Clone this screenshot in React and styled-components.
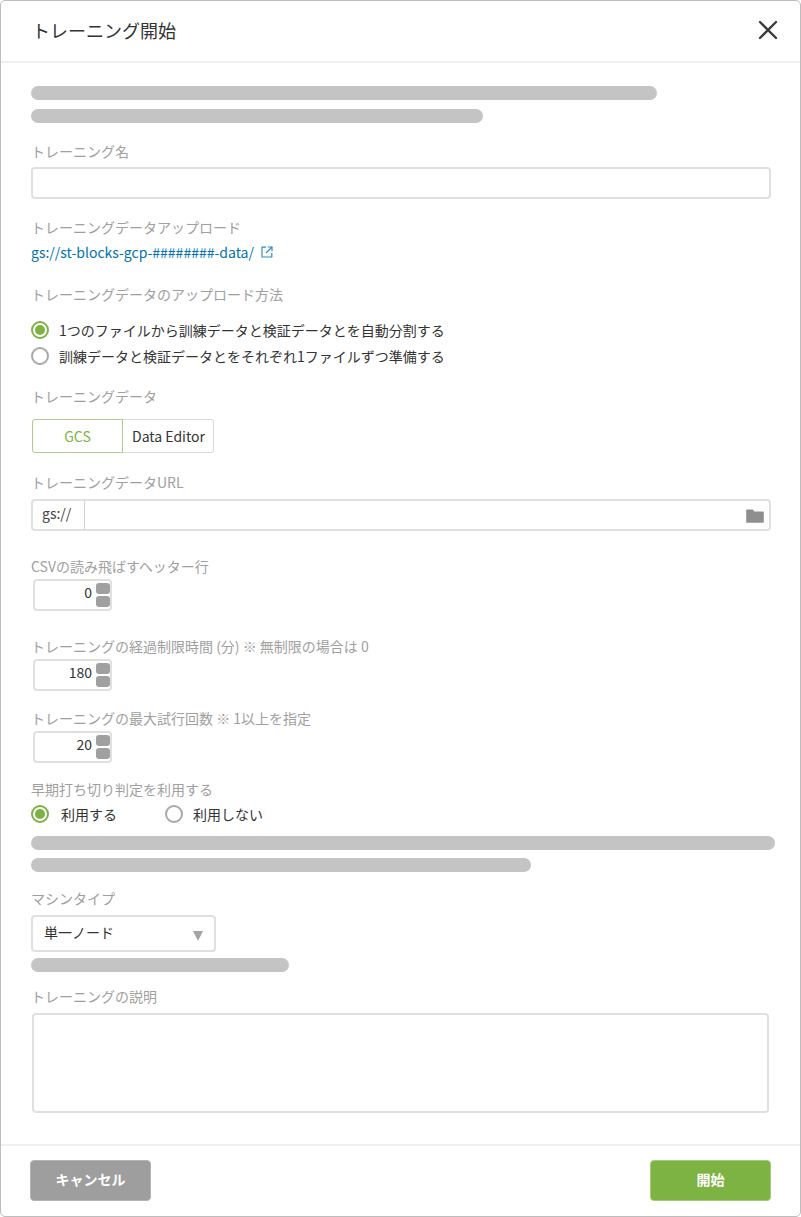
import React from "react";
import styled, { createGlobalStyle } from "styled-components";

const Global = createGlobalStyle`
  html, body { margin: 0; padding: 0; background: #fff; }
  body { font-family: "Noto Sans CJK JP", "Noto Sans", sans-serif; }
  * { box-sizing: border-box; }
`;

const Modal = styled.div`
  width: 801px;
  height: 1217px;
  border: 1px solid #bdbdbd;
  border-radius: 5px;
  background: #fff;
  display: flex;
  flex-direction: column;
`;
const Header = styled.header`
  height: 62px;
  flex: none;
  border-bottom: 2px solid #efefef;
  display: flex;
  align-items: center;
  justify-content: space-between;
  padding: 0 21px 2px 31px;
`;
const Title = styled.h1`
  margin: 0;
  font-size: 18px;
  font-weight: 400;
  color: #333;
  line-height: 26px;
`;
const CloseButton = styled.button`
  border: 0;
  background: none;
  padding: 0;
  width: 22px;
  height: 22px;
  display: flex;
`;
const Body = styled.main`
  flex: 1;
  padding: 0 30px;
  display: flex;
  flex-direction: column;
`;
const Bar = styled.div`
  height: 14px;
  border-radius: 7px;
  background: #c4c4c4;
  width: ${(p) => p.$w}px;
  margin-top: ${(p) => p.$mt}px;
`;
const Label = styled.label`
  display: block;
  font-size: 14px;
  line-height: 20px;
  color: #a0a0a0;
  white-space: nowrap;
  margin-top: ${(p) => p.$mt}px;
`;
const TextInput = styled.div`
  width: 740px;
  height: 32px;
  margin-top: 6px;
  border: 2px solid #e0e0e0;
  border-radius: 4px;
`;
const LinkRow = styled.a`
  display: flex;
  align-items: center;
  gap: 7px;
  margin-top: 5px;
  font-size: 14px;
  line-height: 20px;
  color: #0072b5;
  text-decoration: none;
`;
const RadioGroup = styled.div`
  display: flex;
  flex-direction: column;
  gap: 6px;
  margin-top: ${(p) => p.$mt}px;
`;
const RadioRow = styled.div`
  display: flex;
  align-items: center;
  gap: ${(p) => p.$gap || 40}px;
`;
const RadioItem = styled.span`
  display: inline-flex;
  align-items: center;
  gap: ${(p) => p.$gap}px;
  font-size: 14px;
  line-height: 20px;
  color: #333;
  white-space: nowrap;
`;
const RadioMark = styled.span`
  width: 18px;
  height: 18px;
  flex: none;
  border-radius: 50%;
  border: 2px solid ${(p) => (p.$on ? "#7cb342" : "#a8a8a8")};
  display: flex;
  align-items: center;
  justify-content: center;
  &::after {
    content: "";
    width: 10px;
    height: 10px;
    border-radius: 50%;
    background: ${(p) => (p.$on ? "#7cb342" : "transparent")};
  }
`;
const Toggle = styled.div`
  display: flex;
  margin: 13px 0 0 1px;
  height: 34px;
`;
const ToggleButton = styled.div`
  height: 34px;
  width: ${(p) => p.$w}px;
  padding-left: ${(p) => (p.$on ? 0 : 1)}px;
  display: flex;
  align-items: center;
  justify-content: center;
  font-size: 14px;
  color: ${(p) => (p.$on ? "#7cb342" : "#333")};
  border: 1px solid ${(p) => (p.$on ? "#aecd8a" : "#dcdcdc")};
  border-left-width: ${(p) => (p.$on ? 1 : 0)}px;
  border-radius: ${(p) => (p.$on ? "3px 0 0 3px" : "0 3px 3px 0")};
`;
const UrlInput = styled.div`
  width: 740px;
  height: 32px;
  margin-top: 7px;
  border: 2px solid #e0e0e0;
  border-radius: 4px;
  display: flex;
  align-items: center;
`;
const UrlPrefix = styled.div`
  width: 52px;
  height: 100%;
  border-right: 1px solid #d0d0d0;
  font-size: 14px;
  line-height: 24px;
  color: #444;
  padding-left: 9px;
`;
const FolderWrap = styled.span`
  margin-left: auto;
  margin-right: 5px;
  margin-top: 2px;
  display: flex;
`;
const NumberBox = styled.div`
  width: 79px;
  height: 32px;
  margin: 3px 0 0 2px;
  border: 2px solid #e0e0e0;
  border-radius: 4px;
  display: flex;
  align-items: center;
  justify-content: flex-end;
  gap: 4px;
`;
const NumberValue = styled.span`
  font-size: 14px;
  line-height: 20px;
  color: #333;
  margin-top: -6px;
`;
const Steppers = styled.div`
  display: flex;
  flex-direction: column;
  gap: 2px;
`;
const Stepper = styled.div`
  width: 14px;
  height: 11px;
  border-radius: 3px;
  background: #a0a0a0;
`;
const SelectBox = styled.div`
  width: 185px;
  height: 37px;
  margin-top: 7px;
  border: 2px solid #e0e0e0;
  border-radius: 4px;
  display: flex;
  align-items: center;
  justify-content: space-between;
  padding: 0 11px;
  font-size: 14px;
  color: #333;
`;
const SelectText = styled.span`
  margin-top: -3px;
`;
const Caret = styled.span`
  width: 0;
  height: 0;
  margin-top: 4px;
  border-left: 5px solid transparent;
  border-right: 5px solid transparent;
  border-top: 10px solid #a4a4a4;
`;
const TextArea = styled.div`
  width: 737px;
  height: 100px;
  margin: 7px 0 0 1px;
  border: 2px solid #e0e0e0;
  border-radius: 4px;
`;
const Footer = styled.footer`
  height: 72px;
  flex: none;
  border-top: 2px solid #efefef;
  display: flex;
  justify-content: space-between;
  padding: 14px 29px 0;
`;
const ActionButton = styled.button`
  width: 121px;
  height: 41px;
  padding: 0 0 3px;
  border: 1px solid ${(p) => (p.$primary ? "#a5cb7c" : "#b4b4b4")};
  border-radius: 4px;
  background: ${(p) => (p.$primary ? "#7cb342" : "#9e9e9e")};
  color: #fff;
  font-family: inherit;
  font-size: 14px;
  font-weight: 700;
`;

const ExternalIcon = () => (
  <svg width="12" height="12" viewBox="0 0 12 12" fill="none" stroke="#2f8cc4" strokeWidth="1.2">
    <path d="M5 1.2H1v9.8h9.8V7" />
    <path d="M6.8 1h4.2v4.2" />
    <path d="M11 1L5 7" />
  </svg>
);

const FolderIcon = () => (
  <svg width="18" height="14" viewBox="0 0 18 14">
    <path d="M1.2 0.5h5.6l1.6 2h8.4c.6 0 1 .4 1 1v9.3c0 .6-.4 1-1 1H1.2c-.6 0-1-.4-1-1V1.5c0-.6.4-1 1-1z" fill="#8f8f8f" />
  </svg>
);

const NumberField = ({ value }) => (
  <NumberBox>
    <NumberValue>{value}</NumberValue>
    <Steppers>
      <Stepper />
      <Stepper />
    </Steppers>
  </NumberBox>
);

export default function App() {
  return (
    <Modal>
      <Global />
      <Header>
        <Title>トレーニング開始</Title>
        <CloseButton aria-label="close">
          <svg width="22" height="22" viewBox="0 0 22 22" stroke="#3c3c3c" strokeWidth="2.4" strokeLinecap="round">
            <path d="M3 3l16 16M19 3L3 19" />
          </svg>
        </CloseButton>
      </Header>
      <Body>
        <Bar $w={626} $mt={23} />
        <Bar $w={452} $mt={9} />
        <Label $mt={18}>トレーニング名</Label>
        <TextInput />
        <Label $mt={18}>トレーニングデータアップロード</Label>
        <LinkRow href="#">
          gs://st-blocks-gcp-########-data/
          <ExternalIcon />
        </LinkRow>
        <Label $mt={22}>トレーニングデータのアップロード方法</Label>
        <RadioGroup $mt={16}>
          <RadioItem $gap={10}>
            <RadioMark $on />
            1つのファイルから訓練データと検証データとを自動分割する
          </RadioItem>
          <RadioItem $gap={10}>
            <RadioMark />
            訓練データと検証データとをそれぞれ1ファイルずつ準備する
          </RadioItem>
        </RadioGroup>
        <Label $mt={20}>トレーニングデータ</Label>
        <Toggle>
          <ToggleButton $on $w={91}>GCS</ToggleButton>
          <ToggleButton $w={91}>Data Editor</ToggleButton>
        </Toggle>
        <Label $mt={19}>トレーニングデータURL</Label>
        <UrlInput>
          <UrlPrefix>gs://</UrlPrefix>
          <FolderWrap>
            <FolderIcon />
          </FolderWrap>
        </UrlInput>
        <Label $mt={25}>CSVの読み飛ばすヘッター行</Label>
        <NumberField value="0" />
        <Label $mt={25}>トレーニングの経過制限時間 (分) ※ 無制限の場合は 0</Label>
        <NumberField value="180" />
        <Label $mt={17}>トレーニングの最大試行回数 ※ 1以上を指定</Label>
        <NumberField value="20" />
        <Label $mt={16}>早期打ち切り判定を利用する</Label>
        <RadioGroup $mt={5}>
          <RadioRow $gap={48}>
            <RadioItem $gap={12}>
              <RadioMark $on />
              利用する
            </RadioItem>
            <RadioItem $gap={10}>
              <RadioMark />
              利用しない
            </RadioItem>
          </RadioRow>
        </RadioGroup>
        <Bar $w={744} $mt={12} />
        <Bar $w={500} $mt={8} />
        <Label $mt={16}>マシンタイプ</Label>
        <SelectBox>
          <SelectText>単一ノード</SelectText>
          <Caret />
        </SelectBox>
        <Bar $w={258} $mt={6} />
        <Label $mt={14}>トレーニングの説明</Label>
        <TextArea />
      </Body>
      <Footer>
        <ActionButton>キャンセル</ActionButton>
        <ActionButton $primary>開始</ActionButton>
      </Footer>
    </Modal>
  );
}
